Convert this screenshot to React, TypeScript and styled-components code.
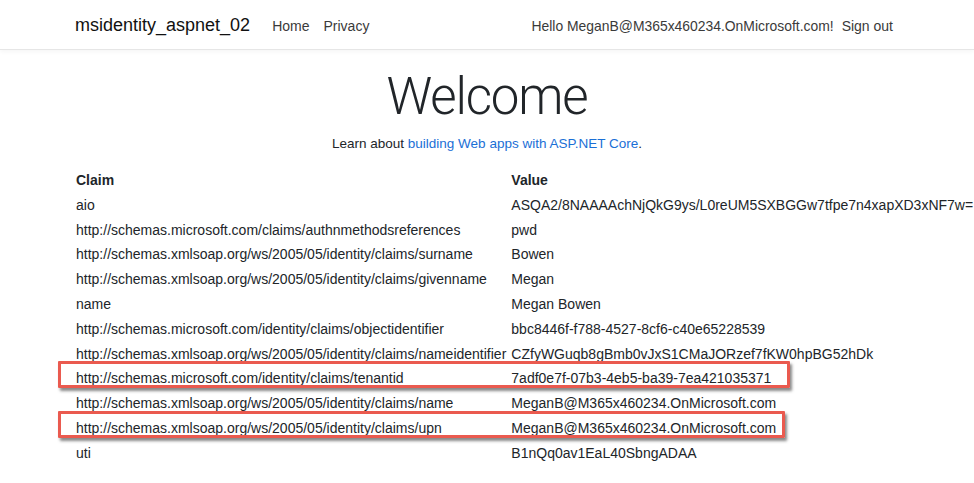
import React from "react";
import styled, { createGlobalStyle } from "styled-components";

const GlobalStyle = createGlobalStyle`
  body {
    margin: 0;
    background: #ffffff;
    font-family: "Liberation Sans", Arial, sans-serif;
    color: #212529;
  }
`;

const NavBar = styled.header`
  height: 49px;
  background: #fff;
  border-bottom: 1px solid #e6e6e6;
  box-shadow: 0 2px 4px rgba(0, 0, 0, 0.04);
`;

const Container = styled.div`
  max-width: 824px;
  margin: 0 auto;
  padding: 0 15px;
`;

const NavInner = styled(Container)`
  height: 100%;
  display: flex;
  align-items: center;
  padding-top: 1px;
`;

const Brand = styled.a`
  font-size: 18px;
  color: #111;
  margin-right: 22px;
  text-decoration: none;
`;

const NavLink = styled.a`
  font-size: 14px;
  color: #3a3a3a;
  margin-right: 14px;
  text-decoration: none;

  &:last-child {
    margin-right: 6px;
  }
`;

const UserLink = styled(NavLink)`
  font-size: 13.9px;
  margin-right: 8px;
`;

const Spacer = styled.div`
  flex: 1;
`;

const Main = styled(Container)`
  padding-top: 20px;
`;

const Title = styled.h1`
  margin: 0;
  text-align: center;
  font-family: "Roboto", "Liberation Sans", sans-serif;
  font-weight: 300;
  font-size: 51px;
  letter-spacing: -1.2px;
  line-height: 54px;
  color: #212529;
`;

const Lead = styled.p`
  margin: 12px 0 17px;
  text-align: center;
  font-size: 13.5px;
  color: #212529;

  a {
    color: #1a6fd6;
    text-decoration: none;
  }
`;

const ClaimTable = styled.div`
  display: grid;
  grid-template-columns: max-content max-content;
  column-gap: 5px;
  margin-left: 1px;
`;

const Cell = styled.div<{ $head?: boolean }>`
  font-size: 14px;
  font-weight: ${(p) => (p.$head ? 700 : 400)};
  line-height: 24.8px;
  color: #212529;
  white-space: nowrap;
`;

const Row = styled.div`
  display: contents;
`;

const Marked = styled.div<{ $box: number }>`
  position: relative;

  &::after {
    content: "";
    position: absolute;
    left: -18px;
    top: -5px;
    height: 21px;
    width: ${(p) => p.$box}px;
    border: 3px solid #ea5a4f;
    border-radius: 1px;
    box-shadow: 2px 3px 3px rgba(40, 40, 40, 0.55);
    pointer-events: none;
  }
`;

const claims: [string, string, number?][] = [
  ["aio", "ASQA2/8NAAAAchNjQkG9ys/L0reUM5SXBGGw7tfpe7n4xapXD3xNF7w="],
  ["http://schemas.microsoft.com/claims/authnmethodsreferences", "pwd"],
  ["http://schemas.xmlsoap.org/ws/2005/05/identity/claims/surname", "Bowen"],
  ["http://schemas.xmlsoap.org/ws/2005/05/identity/claims/givenname", "Megan"],
  ["name", "Megan Bowen"],
  ["http://schemas.microsoft.com/identity/claims/objectidentifier", "bbc8446f-f788-4527-8cf6-c40e65228539"],
  ["http://schemas.xmlsoap.org/ws/2005/05/identity/claims/nameidentifier", "CZfyWGuqb8gBmb0vJxS1CMaJORzef7fKW0hpBG52hDk"],
  ["http://schemas.microsoft.com/identity/claims/tenantid", "7adf0e7f-07b3-4eb5-ba39-7ea421035371", 726],
  ["http://schemas.xmlsoap.org/ws/2005/05/identity/claims/name", "MeganB@M365x460234.OnMicrosoft.com"],
  ["http://schemas.xmlsoap.org/ws/2005/05/identity/claims/upn", "MeganB@M365x460234.OnMicrosoft.com", 721],
  ["uti", "B1nQq0av1EaL40SbngADAA"],
];

export default function App() {
  return (
    <>
      <GlobalStyle />
      <NavBar>
        <NavInner>
          <Brand>msidentity_aspnet_02</Brand>
          <NavLink>Home</NavLink>
          <NavLink>Privacy</NavLink>
          <Spacer />
          <UserLink>Hello MeganB@M365x460234.OnMicrosoft.com!</UserLink>
          <NavLink>Sign out</NavLink>
        </NavInner>
      </NavBar>
      <Main>
        <Title>Welcome</Title>
        <Lead>
          Learn about <a>building Web apps with ASP.NET Core</a>.
        </Lead>
        <ClaimTable>
          <Cell $head>Claim</Cell>
          <Cell $head>Value</Cell>
          {claims.map(([claim, value, box]) => (
            <Row key={claim}>
              {box ? (
                <Marked $box={box}>
                  <Cell>{claim}</Cell>
                </Marked>
              ) : (
                <Cell>{claim}</Cell>
              )}
              <Cell>{value}</Cell>
            </Row>
          ))}
        </ClaimTable>
      </Main>
    </>
  );
}
